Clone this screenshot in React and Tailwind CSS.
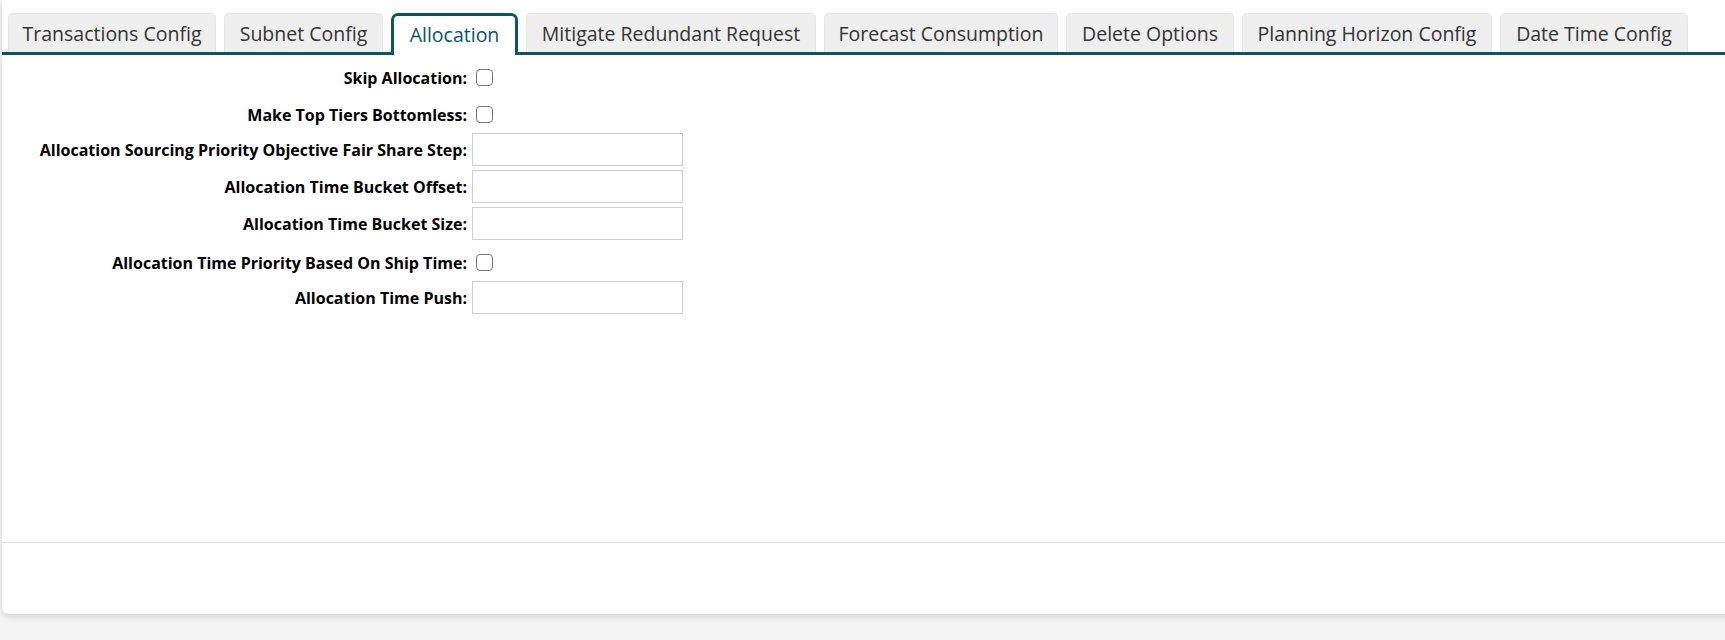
import { useState } from 'react';

const tabs = [
  { label: 'Transactions Config', w: 'w-[208px]' },
  { label: 'Subnet Config', w: 'w-[159px]' },
  { label: 'Allocation', w: 'w-[127px]' },
  { label: 'Mitigate Redundant Request', w: 'w-[290px]' },
  { label: 'Forecast Consumption', w: 'w-[234px]' },
  { label: 'Delete Options', w: 'w-[168px]' },
  { label: 'Planning Horizon Config', w: 'w-[250px]' },
  { label: 'Date Time Config', w: 'w-[188px]' },
];

const fields = [
  { label: 'Skip Allocation:', type: 'check' },
  { label: 'Make Top Tiers Bottomless:', type: 'check' },
  { label: 'Allocation Sourcing Priority Objective Fair Share Step:', type: 'text' },
  { label: 'Allocation Time Bucket Offset:', type: 'text' },
  { label: 'Allocation Time Bucket Size:', type: 'text' },
  { label: 'Allocation Time Priority Based On Ship Time:', type: 'check' },
  { label: 'Allocation Time Push:', type: 'text' },
];

export default function App() {
  const [active, setActive] = useState('Allocation');

  return (
    <div className="h-[640px] overflow-hidden bg-[#f3f3f3] pl-[2px] font-['Open_Sans',sans-serif]">
      <div className="w-[1740px] h-[614px] bg-white rounded-bl-[7px] shadow-[0_3px_6px_rgba(0,0,0,0.12)] flex flex-col">
        {/* tab strip */}
        <div className="flex items-end gap-[8px] pt-[13px] pl-[6px] border-b-[3px] border-[#0b5566]">
          {tabs.map((t) =>
            t.label === active ? (
              <div
                key={t.label}
                className={`${t.w} h-[42px] -mb-[3px] flex items-center justify-center bg-white border-[3px] border-b-0 border-[#0b5566] rounded-t-[7px] text-[19.5px] font-medium text-[#0b5566] pb-[2px]`}
              >
                {t.label}
              </div>
            ) : (
              <button
                key={t.label}
                onClick={() => setActive(t.label)}
                className={`${t.w} h-[39px] pt-[2px] flex items-center justify-center bg-[#eeeeee] border border-b-0 border-[#e6e6e6] rounded-t-[5px] text-[19.5px] text-[#333]`}
              >
                {t.label}
              </button>
            )
          )}
        </div>

        {/* form */}
        <div className="flex-1 pt-[4px]">
          {fields.map((f) =>
            f.type === 'check' ? (
              <div key={f.label} className="flex items-center h-[37px]">
                <div className="w-[465px] text-right text-[16px] font-bold text-black">{f.label}</div>
                <span className="ml-[9px] w-[17px] h-[17px] rounded-[4px] border border-[#767676] bg-white" />
              </div>
            ) : (
              <div key={f.label} className="flex items-center h-[33px] mb-[4px]">
                <div className="w-[465px] text-right text-[16px] font-bold text-black">{f.label}</div>
                <input className="ml-[5px] w-[211px] h-[33px] border border-[#cfcfcf] bg-white outline-none px-2 text-[15px]" />
              </div>
            )
          )}
        </div>

        {/* footer */}
        <div className="h-[72px] border-t border-[#e0e0e0]" />
      </div>
    </div>
  );
}
